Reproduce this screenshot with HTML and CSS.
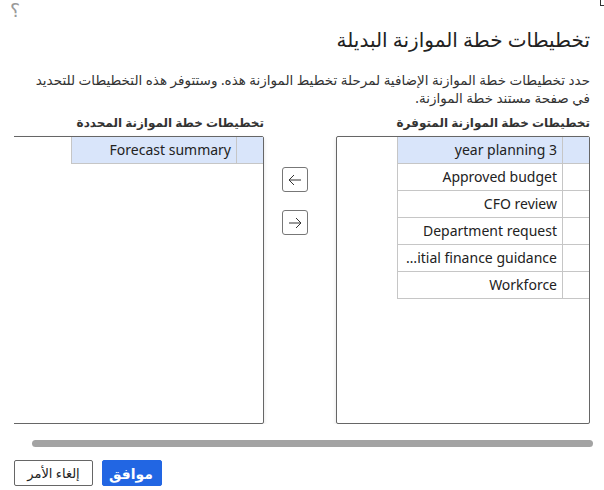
FILE: index.html
```html
<!DOCTYPE html>
<html lang="ar" dir="rtl">
<head>
<meta charset="utf-8">
<link rel="stylesheet" href="styles.css">
</head>
<body>
<div class="dialog">
  <div class="topbar">
    <span class="corner"></span>
    <span class="help">؟</span>
  </div>
  <h1 class="title">تخطيطات خطة الموازنة البديلة</h1>
  <p class="desc">حدد تخطيطات خطة الموازنة الإضافية لمرحلة تخطيط الموازنة هذه. وستتوفر هذه التخطيطات للتحديد في صفحة مستند خطة الموازنة.</p>
  <div class="scroller">
    <div class="lists">
      <div class="panel">
        <div class="label">تخطيطات خطة الموازنة المتوفرة</div>
        <div class="box">
          <div class="grid">
            <div class="row selected"><div class="cell mark"></div><div class="cell name">3 year planning</div></div>
            <div class="row"><div class="cell mark"></div><div class="cell name">Approved budget</div></div>
            <div class="row"><div class="cell mark"></div><div class="cell name">CFO review</div></div>
            <div class="row"><div class="cell mark"></div><div class="cell name">Department request</div></div>
            <div class="row"><div class="cell mark"></div><div class="cell name">Initial finance guidance</div></div>
            <div class="row"><div class="cell mark"></div><div class="cell name">Workforce</div></div>
          </div>
        </div>
      </div>
      <div class="arrows">
        <button class="arrow" aria-label="left"><svg width="14" height="12" viewBox="0 0 14 12"><path d="M13 6H1M6 1L1 6l5 5" fill="none" stroke="#333" stroke-width="1"/></svg></button>
        <button class="arrow" aria-label="right"><svg width="14" height="12" viewBox="0 0 14 12"><path d="M1 6h12M8 1l5 5-5 5" fill="none" stroke="#333" stroke-width="1"/></svg></button>
      </div>
      <div class="panel">
        <div class="label">تخطيطات خطة الموازنة المحددة</div>
        <div class="box">
          <div class="grid">
            <div class="row selected"><div class="cell mark"></div><div class="cell name">Forecast summary</div></div>
          </div>
        </div>
      </div>
    </div>
  </div>
  <div class="scrollbar"><div class="thumb"></div></div>
  <div class="footer">
    <button class="btn primary">موافق</button>
    <button class="btn">إلغاء الأمر</button>
  </div>
</div>
</body>
</html>
```
FILE: styles.css
```css
html, body {
  margin: 0;
  padding: 0;
  background: #fff;
}
body {
  font-family: "Noto Sans", "DejaVu Sans", sans-serif;
  color: #222;
  overflow: hidden;
}
.dialog {
  width: 604px;
  height: 490px;
  box-sizing: border-box;
  padding: 0 14px 0 0;
}
.topbar {
  height: 26px;
  display: flex;
  justify-content: space-between;
  align-items: flex-start;
  margin-right: -14px;
}
.corner {
  width: 4px;
  height: 6px;
  border-left: 1px solid #333;
  border-bottom: 1px solid #333;
  box-sizing: border-box;
}
.help {
  font-size: 19px;
  line-height: 20px;
  color: #9a9a9a;
  margin-top: 0;
  margin-left: 10px;
  font-weight: 300;
}
.title {
  margin: 0;
  font-size: 20px;
  line-height: 28px;
  font-weight: 400;
  color: #222;
}
.desc {
  margin: 17px 0 0 0;
  font-size: 13.5px;
  line-height: 18px;
  color: #333;
  padding-left: 24px;
}
.scroller {
  margin-left: 14px;
  margin-top: 8px;
  overflow: hidden;
}
.lists {
  display: flex;
  align-items: flex-start;
}
.panel {
  flex: 0 0 254px;
  display: flex;
  flex-direction: column;
}
.label {
  font-size: 12px;
  line-height: 16px;
  font-weight: 700;
  color: #333;
  margin-bottom: 5px;
}
.box {
  height: 288px;
  box-sizing: border-box;
  border: 1px solid #666;
  border-radius: 2px;
  box-shadow: 0 2px 4px rgba(0,0,0,0.12);
  background: #fff;
}
.grid {
  width: 192px;
}
.row {
  display: flex;
  height: 27px;
  box-sizing: border-box;
  border-bottom: 1px solid #c6c6c6;
  border-left: 1px solid #c6c6c6;
}
.row.selected {
  background: #d9e5fa;
}
.cell {
  box-sizing: border-box;
  height: 100%;
}
.name {
  flex: 1;
  min-width: 0;
  direction: rtl;
  text-align: right;
  font-size: 14px;
  line-height: 26px;
  color: #222;
  padding: 0 5px 0 7px;
  overflow: hidden;
  white-space: nowrap;
  text-overflow: ellipsis;
}
.mark {
  flex: 0 0 27px;
  border-left: 1px solid #c6c6c6;
}
.arrows {
  flex: 0 0 72px;
  display: flex;
  flex-direction: column;
  align-items: flex-start;
  gap: 18px;
  padding-top: 52px;
  box-sizing: border-box;
}
.arrow {
  width: 26px;
  height: 25px;
  padding: 0;
  border: 1px solid #777;
  border-radius: 3px;
  background: #fff;
  display: flex;
  align-items: center;
  justify-content: center;
  margin-right: 28px;
}
.scrollbar {
  height: 7px;
  margin: 16px -3px 0 32px;
}
.thumb {
  height: 7px;
  border-radius: 4px;
  background: #a3a3a3;
}
.footer {
  display: flex;
  justify-content: flex-end;
  gap: 9px;
  margin-top: 13px;
  margin-left: 14px;
}
.btn {
  height: 26px;
  padding: 0 8px;
  font-family: "Noto Sans", "DejaVu Sans", sans-serif;
  font-size: 13px;
  border: 1px solid #666;
  border-radius: 2px;
  background: #fff;
  color: #222;
  width: 79px;
}
.btn.primary {
  background: #2266e3;
  border-color: #2266e3;
  color: #fff;
  font-weight: 700;
  font-size: 14px;
  width: 60px;
}
```
